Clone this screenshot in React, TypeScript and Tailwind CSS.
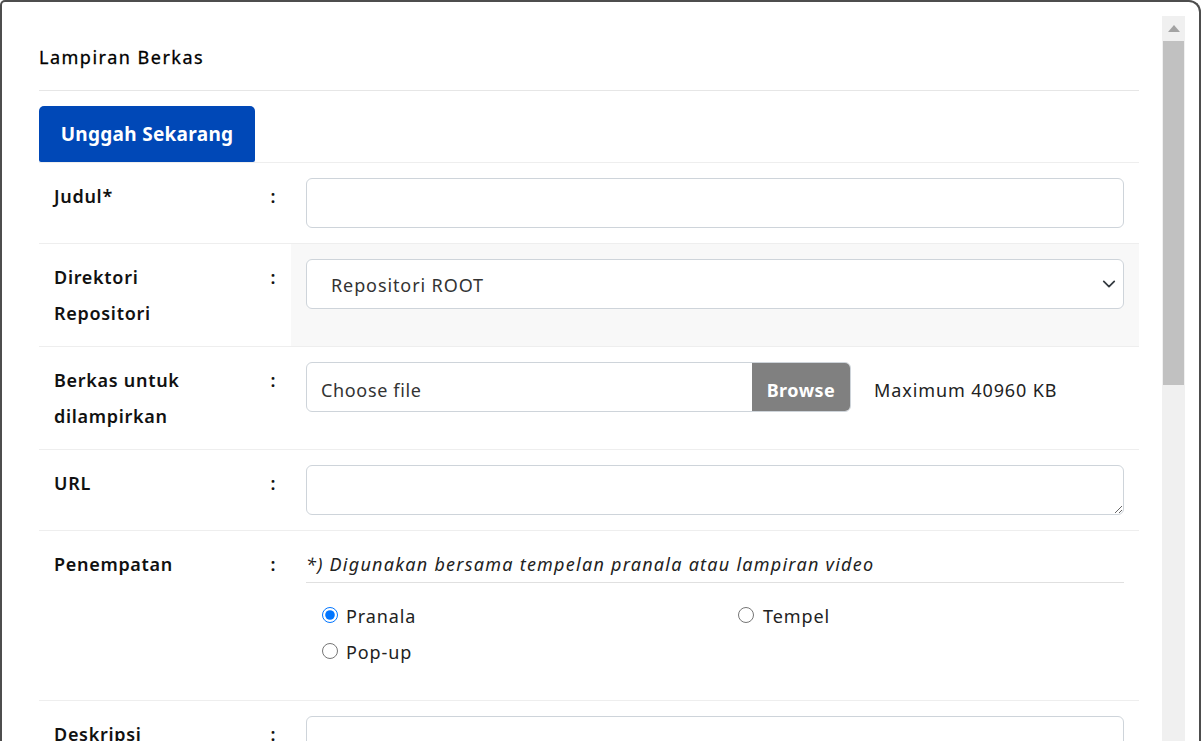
import React from 'react';

function Row({
    label,
    children,
    shaded = false,
}: {
    label: React.ReactNode;
    children: React.ReactNode;
    shaded?: boolean;
}) {
    return (
        <div className="flex border-t border-[#eeeeee]">
            <div className="w-[216px] shrink-0 px-[15px] py-[15px] text-[18px] leading-[36px] font-semibold tracking-[0.7px] text-[#111]">
                {label}
            </div>
            <div className="w-[36px] shrink-0 py-[15px] text-center text-[18px] leading-[36px] font-semibold text-[#111]">
                :
            </div>
            <div className={`flex-1 px-[15px] py-[15px] ${shaded ? 'bg-[#f8f8f8]' : ''}`}>{children}</div>
        </div>
    );
}

const inputCls =
    'block w-full h-[50px] rounded-[6px] border border-[#ced4da] bg-white px-[15px] text-[18px] text-[#333] outline-none';

export default function App() {
    return (
        <div className="w-[1202px] h-[741px] overflow-hidden bg-white font-['Noto_Sans',sans-serif]">
            <div className="mr-px flex h-[780px] rounded-tl-[5px] rounded-tr-[12px] border-l-2 border-r-2 border-t-2 border-[#4d4d4d]">
                <div className="w-[1137px] shrink-0 pl-[37px]">
                    <div className="pt-[42px] pb-[19px] text-[18px] leading-[27px] tracking-[1.5px] text-black [-webkit-text-stroke:0.3px_black]">
                        Lampiran Berkas
                    </div>
                    <div className="border-t border-[#e6e6e6]" />

                    <div className="mt-[15px] border-b border-[#dee2e6]">
                        <button className="h-[56px] w-[216px] rounded-t-[5px] rounded-b-[2px] bg-[#0048b7] text-[19px] font-bold tracking-[0.3px] text-white">
                            Unggah Sekarang
                        </button>
                    </div>

                    <div className="-mt-px">
                        <Row label="Judul*">
                            <input type="text" className={inputCls} />
                        </Row>

                        <Row
                            shaded
                            label={
                                <>
                                    Direktori
                                    <br />
                                    Repositori
                                </>
                            }
                        >
                            <div className="relative">
                                <select className="block h-[50px] w-full appearance-none rounded-[6px] border border-[#ced4da] bg-white pl-[24px] pt-[3px] text-[18px] tracking-[0.9px] text-[#333] outline-none">
                                    <option>Repositori ROOT</option>
                                </select>
                                <svg
                                    className="pointer-events-none absolute right-[8px] top-[18px]"
                                    width="14"
                                    height="14"
                                    viewBox="0 0 16 16"
                                    fill="none"
                                    stroke="#343a40"
                                    strokeWidth="2"
                                    strokeLinecap="round"
                                    strokeLinejoin="round"
                                >
                                    <path d="M2 5l6 6 6-6" />
                                </svg>
                            </div>
                        </Row>

                        <Row
                            label={
                                <>
                                    Berkas untuk
                                    <br />
                                    dilampirkan
                                </>
                            }
                        >
                            <div className="flex items-center">
                                <div className="flex h-[50px] w-[545px] overflow-hidden rounded-[6px] border border-[#ced4da] bg-white">
                                    <div className="flex flex-1 items-center pl-[14px] pt-[7px] text-[18px] tracking-[0.65px] text-[#333]">
                                        Choose file
                                    </div>
                                    <div className="flex w-[98px] items-center justify-center pt-[7px] text-[18px] font-bold tracking-[0.5px] text-white bg-[#808080]">
                                        Browse
                                    </div>
                                </div>
                                <span className="ml-[23px] pt-[7px] text-[18px] tracking-[0.9px] text-[#222]">
                                    Maximum 40960 KB
                                </span>
                            </div>
                        </Row>

                        <Row label="URL">
                            <textarea className="block h-[50px] w-full rounded-[6px] border border-[#ced4da] bg-white px-[15px] text-[18px] outline-none" />
                        </Row>

                        <Row label="Penempatan">
                            <div className="border-b border-[#e0e0e0] text-[18px] leading-[36px] italic tracking-[1.25px] text-[#222]">
                                *) Digunakan bersama tempelan pranala atau lampiran video
                            </div>
                            <div className="mt-[14px] mb-[16px] grid grid-cols-[416px_1fr] pl-[16px] text-[18px] leading-[36px] tracking-[0.9px] text-[#222]">
                                <label className="flex h-[36px] items-center gap-[8px]">
                                    <input type="radio" name="pos" defaultChecked className="m-0 h-[16px] w-[16px]" />
                                    <span className="relative top-[1px]">Pranala</span>
                                </label>
                                <label className="flex h-[36px] items-center gap-[9px]">
                                    <input type="radio" name="pos" className="m-0 h-[16px] w-[16px]" />
                                    <span className="relative top-[1px]">Tempel</span>
                                </label>
                                <label className="flex h-[36px] items-center gap-[8px]">
                                    <input type="radio" name="pos" className="m-0 h-[16px] w-[16px]" />
                                    <span className="relative top-[1px]">Pop-up</span>
                                </label>
                            </div>
                        </Row>

                        <Row label="Deskripsi">
                            <textarea className="block h-[100px] w-full rounded-[6px] border border-[#ced4da] bg-white px-[15px] text-[18px] outline-none" />
                        </Row>
                    </div>
                </div>

                {/* fake scrollbar */}
                <div className="ml-[23px] mt-[14px] flex w-[23px] shrink-0 flex-col bg-[#f0f0f0]">
                    <div className="flex h-[25px] items-center justify-center">
                        <svg width="12" height="7" viewBox="0 0 12 7">
                            <path d="M6 0L12 7H0z" fill="#a3a3a3" />
                        </svg>
                    </div>
                    <div className="mx-px h-[344px] bg-[#c1c1c1]" />
                </div>
            </div>
        </div>
    );
}
